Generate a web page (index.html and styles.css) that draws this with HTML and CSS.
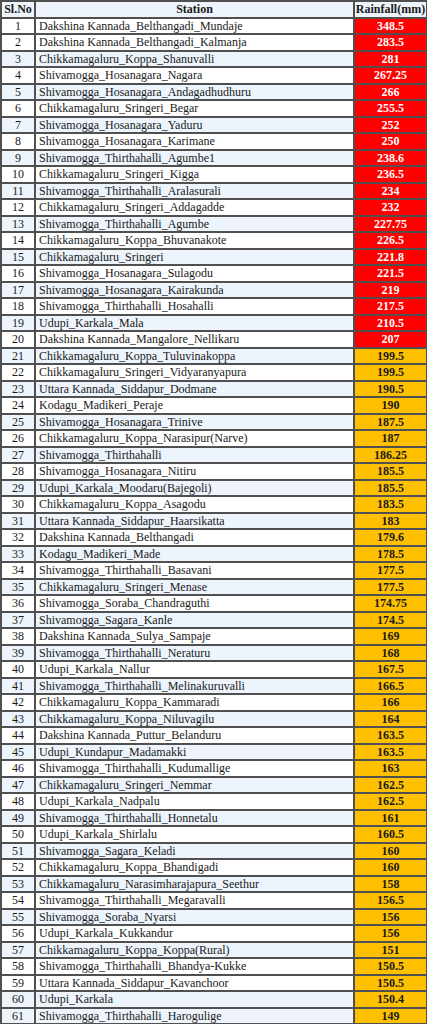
FILE: index.html
```html
<!DOCTYPE html>
<html>
<head>
<meta charset="utf-8">
<link rel="stylesheet" href="styles.css">
</head>
<body>
<table class="rain">
<colgroup><col class="c-no"><col class="c-st"><col class="c-rf"></colgroup>
<thead>
<tr class="alt"><th>Sl.No</th><th>Station</th><th>Rainfall(mm)</th></tr>
</thead>
<tbody>
<tr><td class="no">1</td><td>Dakshina Kannada_Belthangadi_Mundaje</td><td class="rf red">348.5</td></tr>
<tr><td class="no">2</td><td>Dakshina Kannada_Belthangadi_Kalmanja</td><td class="rf red">283.5</td></tr>
<tr class="alt"><td class="no">3</td><td>Chikkamagaluru_Koppa_Shanuvalli</td><td class="rf red">281</td></tr>
<tr><td class="no">4</td><td>Shivamogga_Hosanagara_Nagara</td><td class="rf red">267.25</td></tr>
<tr class="alt"><td class="no">5</td><td>Shivamogga_Hosanagara_Andagadhudhuru</td><td class="rf red">266</td></tr>
<tr><td class="no">6</td><td>Chikkamagaluru_Sringeri_Begar</td><td class="rf red">255.5</td></tr>
<tr class="alt"><td class="no">7</td><td>Shivamogga_Hosanagara_Yaduru</td><td class="rf red">252</td></tr>
<tr><td class="no">8</td><td>Shivamogga_Hosanagara_Karimane</td><td class="rf red">250</td></tr>
<tr class="alt"><td class="no">9</td><td>Shivamogga_Thirthahalli_Agumbe1</td><td class="rf red">238.6</td></tr>
<tr><td class="no">10</td><td>Chikkamagaluru_Sringeri_Kigga</td><td class="rf red">236.5</td></tr>
<tr class="alt"><td class="no">11</td><td>Shivamogga_Thirthahalli_Aralasurali</td><td class="rf red">234</td></tr>
<tr><td class="no">12</td><td>Chikkamagaluru_Sringeri_Addagadde</td><td class="rf red">232</td></tr>
<tr class="alt"><td class="no">13</td><td>Shivamogga_Thirthahalli_Agumbe</td><td class="rf red">227.75</td></tr>
<tr><td class="no">14</td><td>Chikkamagaluru_Koppa_Bhuvanakote</td><td class="rf red">226.5</td></tr>
<tr class="alt"><td class="no">15</td><td>Chikkamagaluru_Sringeri</td><td class="rf red">221.8</td></tr>
<tr><td class="no">16</td><td>Shivamogga_Hosanagara_Sulagodu</td><td class="rf red">221.5</td></tr>
<tr class="alt"><td class="no">17</td><td>Shivamogga_Hosanagara_Kairakunda</td><td class="rf red">219</td></tr>
<tr><td class="no">18</td><td>Shivamogga_Thirthahalli_Hosahalli</td><td class="rf red">217.5</td></tr>
<tr class="alt"><td class="no">19</td><td>Udupi_Karkala_Mala</td><td class="rf red">210.5</td></tr>
<tr><td class="no">20</td><td>Dakshina Kannada_Mangalore_Nellikaru</td><td class="rf red">207</td></tr>
<tr class="alt"><td class="no">21</td><td>Chikkamagaluru_Koppa_Tuluvinakoppa</td><td class="rf amb">199.5</td></tr>
<tr><td class="no">22</td><td>Chikkamagaluru_Sringeri_Vidyaranyapura</td><td class="rf amb">199.5</td></tr>
<tr class="alt"><td class="no">23</td><td>Uttara Kannada_Siddapur_Dodmane</td><td class="rf amb">190.5</td></tr>
<tr><td class="no">24</td><td>Kodagu_Madikeri_Peraje</td><td class="rf amb">190</td></tr>
<tr class="alt"><td class="no">25</td><td>Shivamogga_Hosanagara_Trinive</td><td class="rf amb">187.5</td></tr>
<tr><td class="no">26</td><td>Chikkamagaluru_Koppa_Narasipur(Narve)</td><td class="rf amb">187</td></tr>
<tr class="alt"><td class="no">27</td><td>Shivamogga_Thirthahalli</td><td class="rf amb">186.25</td></tr>
<tr><td class="no">28</td><td>Shivamogga_Hosanagara_Nitiru</td><td class="rf amb">185.5</td></tr>
<tr class="alt"><td class="no">29</td><td>Udupi_Karkala_Moodaru(Bajegoli)</td><td class="rf amb">185.5</td></tr>
<tr><td class="no">30</td><td>Chikkamagaluru_Koppa_Asagodu</td><td class="rf amb">183.5</td></tr>
<tr class="alt"><td class="no">31</td><td>Uttara Kannada_Siddapur_Haarsikatta</td><td class="rf amb">183</td></tr>
<tr><td class="no">32</td><td>Dakshina Kannada_Belthangadi</td><td class="rf amb">179.6</td></tr>
<tr class="alt"><td class="no">33</td><td>Kodagu_Madikeri_Made</td><td class="rf amb">178.5</td></tr>
<tr><td class="no">34</td><td>Shivamogga_Thirthahalli_Basavani</td><td class="rf amb">177.5</td></tr>
<tr class="alt"><td class="no">35</td><td>Chikkamagaluru_Sringeri_Menase</td><td class="rf amb">177.5</td></tr>
<tr><td class="no">36</td><td>Shivamogga_Soraba_Chandraguthi</td><td class="rf amb">174.75</td></tr>
<tr class="alt"><td class="no">37</td><td>Shivamogga_Sagara_Kanle</td><td class="rf amb">174.5</td></tr>
<tr><td class="no">38</td><td>Dakshina Kannada_Sulya_Sampaje</td><td class="rf amb">169</td></tr>
<tr class="alt"><td class="no">39</td><td>Shivamogga_Thirthahalli_Neraturu</td><td class="rf amb">168</td></tr>
<tr><td class="no">40</td><td>Udupi_Karkala_Nallur</td><td class="rf amb">167.5</td></tr>
<tr class="alt"><td class="no">41</td><td>Shivamogga_Thirthahalli_Melinakuruvalli</td><td class="rf amb">166.5</td></tr>
<tr><td class="no">42</td><td>Chikkamagaluru_Koppa_Kammaradi</td><td class="rf amb">166</td></tr>
<tr class="alt"><td class="no">43</td><td>Chikkamagaluru_Koppa_Niluvagilu</td><td class="rf amb">164</td></tr>
<tr><td class="no">44</td><td>Dakshina Kannada_Puttur_Belanduru</td><td class="rf amb">163.5</td></tr>
<tr class="alt"><td class="no">45</td><td>Udupi_Kundapur_Madamakki</td><td class="rf amb">163.5</td></tr>
<tr><td class="no">46</td><td>Shivamogga_Thirthahalli_Kudumallige</td><td class="rf amb">163</td></tr>
<tr class="alt"><td class="no">47</td><td>Chikkamagaluru_Sringeri_Nemmar</td><td class="rf amb">162.5</td></tr>
<tr><td class="no">48</td><td>Udupi_Karkala_Nadpalu</td><td class="rf amb">162.5</td></tr>
<tr class="alt"><td class="no">49</td><td>Shivamogga_Thirthahalli_Honnetalu</td><td class="rf amb">161</td></tr>
<tr><td class="no">50</td><td>Udupi_Karkala_Shirlalu</td><td class="rf amb">160.5</td></tr>
<tr class="alt"><td class="no">51</td><td>Shivamogga_Sagara_Keladi</td><td class="rf amb">160</td></tr>
<tr><td class="no">52</td><td>Chikkamagaluru_Koppa_Bhandigadi</td><td class="rf amb">160</td></tr>
<tr class="alt"><td class="no">53</td><td>Chikkamagaluru_Narasimharajapura_Seethur</td><td class="rf amb">158</td></tr>
<tr><td class="no">54</td><td>Shivamogga_Thirthahalli_Megaravalli</td><td class="rf amb">156.5</td></tr>
<tr class="alt"><td class="no">55</td><td>Shivamogga_Soraba_Nyarsi</td><td class="rf amb">156</td></tr>
<tr><td class="no">56</td><td>Udupi_Karkala_Kukkandur</td><td class="rf amb">156</td></tr>
<tr class="alt"><td class="no">57</td><td>Chikkamagaluru_Koppa_Koppa(Rural)</td><td class="rf amb">151</td></tr>
<tr><td class="no">58</td><td>Shivamogga_Thirthahalli_Bhandya-Kukke</td><td class="rf amb">150.5</td></tr>
<tr><td class="no">59</td><td>Uttara Kannada_Siddapur_Kavanchoor</td><td class="rf amb">150.5</td></tr>
<tr class="alt"><td class="no">60</td><td>Udupi_Karkala</td><td class="rf amb">150.4</td></tr>
<tr class="alt"><td class="no">61</td><td>Shivamogga_Thirthahalli_Harogulige</td><td class="rf amb">149</td></tr>
</tbody>
</table>
</body>
</html>
```

FILE: styles.css
```css
html, body {
  margin: 0;
  padding: 0;
  background: #ffffff;
}

.rain {
  border-collapse: collapse;
  table-layout: fixed;
  width: 426px;
  font-family: "Liberation Serif", "Times New Roman", serif;
  font-size: 12px;
  color: #1a1a1a;
}

.c-no { width: 34px; }
.c-st { width: 319px; }
.c-rf { width: 73px; }

.rain tr {
  height: 16.5px;
}

.rain th,
.rain td {
  border: 2px solid #505050;
  padding: 0 0 0 3px;
  line-height: 12px;
  white-space: nowrap;
  overflow: hidden;
  vertical-align: middle;
}

.rain th {
  font-weight: bold;
  text-align: center;
  padding: 0;
}

.rain tr.alt th,
.rain tr.alt td {
  background: #edf4fc;
}

.rain td.no {
  text-align: center;
  padding: 0;
}

.rain td.rf {
  text-align: center;
  font-weight: bold;
  padding: 0;
}

.rain tr td.red {
  background: #ff0000;
  color: #ffffff;
}

.rain tr td.amb {
  background: #ffc000;
  color: #1a1a1a;
}
```
